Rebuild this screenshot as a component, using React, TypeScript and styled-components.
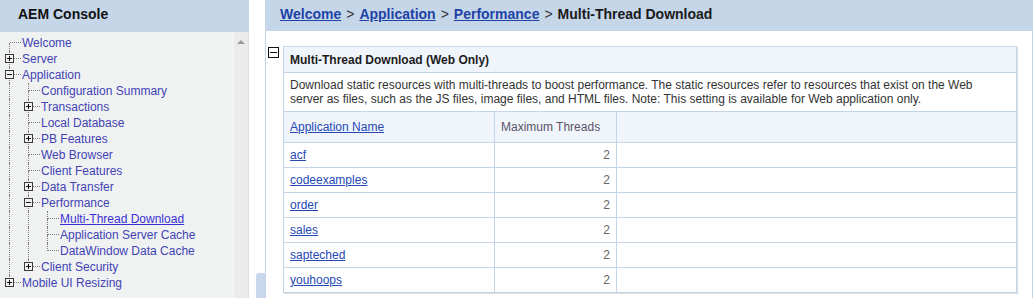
import React from "react";
import styled, { createGlobalStyle } from "styled-components";

const GlobalStyle = createGlobalStyle`
  html, body { margin: 0; padding: 0; background: #ffffff; }
  body { font-family: "Liberation Sans", Arial, sans-serif; font-size: 12px; }
  #root { height: 298px; }
`;

const HEADER_BG = "#c6d6e9";
const LINE = "#c5d5e8";

const Page = styled.div`
  display: flex;
  height: 298px;
  width: 1036px;
  overflow: hidden;
`;

const LeftPanel = styled.div`
  width: 249px;
  flex-shrink: 0;
  display: flex;
  flex-direction: column;
`;

const PanelHeader = styled.div`
  height: 32px;
  flex-shrink: 0;
  background: ${HEADER_BG};
  padding-left: 18px;
  font-weight: bold;
  font-size: 14px;
  line-height: 29px;
  color: #111;
`;

const TreeArea = styled.div`
  flex: 1;
  display: flex;
  min-height: 0;
`;

const TreeScroll = styled.div`
  flex: 1;
  background: #f0f2f1;
  padding-top: 3px;
`;

const Scrollbar = styled.div`
  width: 16px;
  box-sizing: border-box;
  background: #ebebeb;
  border-left: 1px solid #f7f7f7;
  border-right: 1px solid #e0e0e0;
  display: flex;
  justify-content: center;
  padding-top: 8px;
`;

const ScrollArrow = styled.div`
  width: 0;
  height: 0;
  border-left: 4px solid transparent;
  border-right: 4px solid transparent;
  border-bottom: 4px solid #9c9c9c;
`;

const TreeRow = styled.div`
  display: flex;
  height: 16px;
  align-items: stretch;
`;

const Guide = styled.div<{ $line: boolean }>`
  width: 10px;
  margin-right: 9px;
  box-sizing: border-box;
  flex-shrink: 0;
  border-right: ${(p) => (p.$line ? "1px dotted #7d7d7d" : "none")};
`;

const Connector = styled.div`
  position: relative;
  width: 21px;
  flex-shrink: 0;
  display: grid;
  grid-template-columns: 10px 11px;
  grid-template-rows: 8px 8px;
`;

const ConnCell = styled.div<{ $right?: boolean; $bottom?: boolean }>`
  box-sizing: border-box;
  border-right: ${(p) => (p.$right ? "1px dotted #7d7d7d" : "none")};
  border-bottom: ${(p) => (p.$bottom ? "1px dotted #7d7d7d" : "none")};
`;

const Expander = styled.div`
  position: absolute;
  left: 5px;
  top: 3px;
  width: 9px;
  height: 9px;
  box-sizing: border-box;
  border: 1px solid #3a3a3a;
  background: #f0f2f1;
  display: flex;
  align-items: center;
  justify-content: center;
`;

const NodeLabel = styled.span<{ $selected?: boolean }>`
  margin-left: 1px;
  font-size: 12px;
  line-height: 16px;
  white-space: nowrap;
  color: ${(p) => (p.$selected ? "#3a2fd6" : "#4242b6")};
  text-decoration: ${(p) => (p.$selected ? "underline" : "none")};
  cursor: pointer;
`;

const Gap = styled.div`
  width: 16px;
  flex-shrink: 0;
  display: flex;
  flex-direction: column;
  justify-content: flex-end;
  align-items: flex-end;
`;

const GapTab = styled.div`
  width: 9px;
  height: 25px;
  background: #c9d7ee;
  border-top-left-radius: 3px;
`;

const RightPanel = styled.div`
  width: 768px;
  flex-shrink: 0;
  display: flex;
  flex-direction: column;
`;

const RightHeader = styled.div`
  height: 31px;
  flex-shrink: 0;
  background: ${HEADER_BG};
  padding-left: 15px;
  font-weight: bold;
  font-size: 14px;
  line-height: 29px;
  color: #1a1a1a;
  white-space: nowrap;
`;

const Crumb = styled.a`
  color: #2043a6;
  text-decoration: underline;
  cursor: pointer;
`;

const Sep = styled.span`
  font-weight: normal;
  color: #333;
  margin: 0 5px;
`;

const Content = styled.div`
  flex: 1;
  background: #fff;
  border-left: 1px solid ${LINE};
  border-right: 1px solid ${LINE};
  display: flex;
  align-items: flex-start;
  padding: 15px 15px 0 2px;
`;

const CollapseBox = styled.div`
  width: 11px;
  height: 11px;
  box-sizing: border-box;
  border: 1px solid #111;
  margin-top: 1px;
  margin-right: 4px;
  flex-shrink: 0;
  display: flex;
  align-items: center;
  justify-content: center;
`;

const Table = styled.table`
  flex: 1;
  border-collapse: collapse;
  table-layout: fixed;
  box-shadow: 1px 1px 0 #d9dde3;
  font-size: 12px;
`;

const Cell = styled.td<{ $align?: "left" | "right"; $tint?: boolean }>`
  box-sizing: border-box;
  border: 1px solid ${LINE};
  padding: 0 6px;
  text-align: ${(p) => p.$align || "left"};
  background: ${(p) => (p.$tint ? "#f0f5fc" : "#fff")};
  color: #666;
  height: 25px;
  vertical-align: middle;
`;

const TitleCell = styled(Cell)`
  height: 26px;
  color: #1c1c1c;
  font-weight: bold;
`;

const DescCell = styled(Cell)`
  height: 39px;
  color: #333;
  line-height: 14px;
  padding: 1px 24px 2px 6px;
`;

const HeadCell = styled(Cell)`
  height: 31px;
  color: #5b5366;
`;

const TableLink = styled.a`
  color: #2448b4;
  text-decoration: underline;
  cursor: pointer;
`;

type TreeNode = {
  label: string;
  children?: TreeNode[];
  expanded?: boolean;
  selected?: boolean;
};

const tree: TreeNode[] = [
  { label: "Welcome" },
  { label: "Server", children: [{ label: "" }] },
  {
    label: "Application",
    expanded: true,
    children: [
      { label: "Configuration Summary" },
      { label: "Transactions", children: [{ label: "" }] },
      { label: "Local Database" },
      { label: "PB Features", children: [{ label: "" }] },
      { label: "Web Browser" },
      { label: "Client Features" },
      { label: "Data Transfer", children: [{ label: "" }] },
      {
        label: "Performance",
        expanded: true,
        children: [
          { label: "Multi-Thread Download", selected: true },
          { label: "Application Server Cache" },
          { label: "DataWindow Data Cache" },
        ],
      },
      { label: "Client Security", children: [{ label: "" }] },
    ],
  },
  { label: "Mobile UI Resizing", children: [{ label: "" }] },
];

type FlatRow = {
  node: TreeNode;
  guides: boolean[];
  first: boolean;
  last: boolean;
};

function flatten(nodes: TreeNode[], guides: boolean[], root: boolean): FlatRow[] {
  const out: FlatRow[] = [];
  nodes.forEach((n, i) => {
    const last = i === nodes.length - 1;
    out.push({ node: n, guides, first: root && i === 0, last });
    if (n.expanded && n.children) {
      out.push(...flatten(n.children, [...guides, !last], false));
    }
  });
  return out;
}

const Sign = ({ plus }: { plus: boolean }) => (
  <svg width="7" height="7" viewBox="0 0 7 7">
    <rect x="1" y="3" width="5" height="1" fill="#111" />
    {plus && <rect x="3" y="1" width="1" height="5" fill="#111" />}
  </svg>
);

const apps = ["acf", "codeexamples", "order", "sales", "sapteched", "youhoops"];

export default function App() {
  const rows = flatten(tree, [], true);
  return (
    <>
      <GlobalStyle />
      <Page>
        <LeftPanel>
          <PanelHeader>AEM Console</PanelHeader>
          <TreeArea>
            <TreeScroll>
              {rows.map((r, idx) => {
                const hasKids = !!r.node.children;
                return (
                  <TreeRow key={idx}>
                    {r.guides.map((g, gi) => (
                      <Guide key={gi} $line={g} />
                    ))}
                    <Connector>
                      <ConnCell $right={!r.first} />
                      <ConnCell $bottom />
                      <ConnCell $right={!r.last} />
                      <ConnCell />
                      {hasKids && (
                        <Expander>
                          <Sign plus={!r.node.expanded} />
                        </Expander>
                      )}
                    </Connector>
                    <NodeLabel $selected={r.node.selected}>{r.node.label}</NodeLabel>
                  </TreeRow>
                );
              })}
            </TreeScroll>
            <Scrollbar>
              <ScrollArrow />
            </Scrollbar>
          </TreeArea>
        </LeftPanel>
        <Gap>
          <GapTab />
        </Gap>
        <RightPanel>
          <RightHeader>
            <Crumb>Welcome</Crumb>
            <Sep>&gt;</Sep>
            <Crumb>Application</Crumb>
            <Sep>&gt;</Sep>
            <Crumb>Performance</Crumb>
            <Sep>&gt;</Sep>
            Multi-Thread Download
          </RightHeader>
          <Content>
            <CollapseBox>
              <svg width="9" height="9" viewBox="0 0 9 9">
                <rect x="1" y="4" width="7" height="1" fill="#111" />
              </svg>
            </CollapseBox>
            <Table>
              <colgroup>
                <col style={{ width: 211 }} />
                <col style={{ width: 122 }} />
                <col />
              </colgroup>
              <tbody>
                <tr>
                  <TitleCell colSpan={3} $tint>
                    Multi-Thread Download (Web Only)
                  </TitleCell>
                </tr>
                <tr>
                  <DescCell colSpan={3}>
                    Download static resources with multi-threads to boost performance. The static
                    resources refer to resources that exist on the Web server as files, such as the JS
                    files, image files, and HTML files. Note: This setting is available for Web
                    application only.
                  </DescCell>
                </tr>
                <tr>
                  <HeadCell $tint>
                    <TableLink>Application Name</TableLink>
                  </HeadCell>
                  <HeadCell $tint>Maximum Threads</HeadCell>
                  <HeadCell $tint />
                </tr>
                {apps.map((a) => (
                  <tr key={a}>
                    <Cell>
                      <TableLink>{a}</TableLink>
                    </Cell>
                    <Cell $align="right">2</Cell>
                    <Cell />
                  </tr>
                ))}
              </tbody>
            </Table>
          </Content>
        </RightPanel>
      </Page>
    </>
  );
}
